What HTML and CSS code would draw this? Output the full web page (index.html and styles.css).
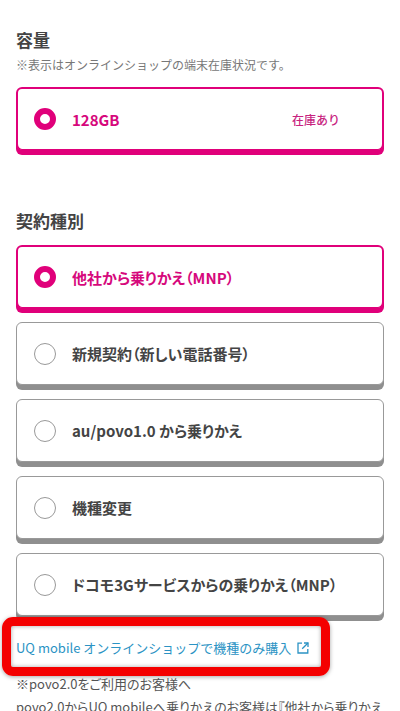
FILE: index.html
```html
<!DOCTYPE html>
<html lang="ja">
<head>
    <meta charset="utf-8">
    <link rel="stylesheet" href="styles.css">
    <title>容量と契約種別</title>
</head>
<body>
    <div class="page">
        <section class="capacity">
            <h2 class="section-title">容量</h2>
            <p class="note">※表示はオンラインショップの端末在庫状況です。</p>
            <div class="option selected">
                <span class="radio"></span>
                <span class="label">128GB</span>
                <span class="stock">在庫あり</span>
            </div>
        </section>

        <section class="contract">
            <h2 class="section-title">契約種別</h2>
            <div class="option-list">
                <div class="option selected">
                    <span class="radio"></span>
                    <span class="label">他社から乗りかえ（MNP）</span>
                </div>
                <div class="option">
                    <span class="radio"></span>
                    <span class="label">新規契約（新しい電話番号）</span>
                </div>
                <div class="option">
                    <span class="radio"></span>
                    <span class="label">au/povo1.0 から乗りかえ</span>
                </div>
                <div class="option">
                    <span class="radio"></span>
                    <span class="label">機種変更</span>
                </div>
                <div class="option">
                    <span class="radio"></span>
                    <span class="label">ドコモ3Gサービスからの乗りかえ（MNP）</span>
                </div>
            </div>
        </section>

        <div class="shop-link-row">
            <a class="shop-link" href="#">UQ mobile オンラインショップで機種のみ購入
                <svg class="external-icon" viewBox="0 0 12 12" width="12" height="12" fill="none" stroke="currentColor" stroke-width="1.3">
                    <path d="M5 1.2H1v9.8h9.8V7"/>
                    <path d="M7 1h4v4"/>
                    <path d="M11 1L5.2 6.8"/>
                </svg>
            </a>
            <div class="highlight"></div>
        </div>

        <p class="povo-title">※povo2.0をご利用のお客様へ</p>
        <p class="povo-text">povo2.0からUQ mobileへ乗りかえのお客様は『他社から乗りかえ（MNP）』をお選びください。</p>
    </div>
</body>
</html>
```

FILE: styles.css
```css
html, body {
    margin: 0;
    height: 711px;
    overflow: hidden;
    background-color: #fff;
}

.page {
    padding: 29px 16px 0;
    font-family: "Noto Sans CJK JP", "Noto Sans", sans-serif;
    color: #444;
}

.section-title {
    margin: 0;
    font-size: 17px;
    line-height: 22px;
    font-weight: 700;
    color: #444;
}

.note {
    margin: 5px 0 13px;
    font-size: 12px;
    line-height: 18px;
    color: #777;
}

.contract {
    margin-top: 60px;
}

.contract .section-title {
    margin-bottom: 13px;
}

.option-list {
    display: flex;
    flex-direction: column;
    gap: 14px;
}

.option {
    display: flex;
    align-items: center;
    box-sizing: border-box;
    height: 63px;
    padding: 0 16px 0 17px;
    background-color: #fff;
    border: 1px solid #999;
    border-radius: 6px;
    box-shadow: 0 5px 0 #8f8f8f;
}

.radio {
    box-sizing: border-box;
    flex: none;
    width: 22px;
    height: 22px;
    margin-right: 16px;
    border: 1px solid #999;
    border-radius: 50%;
    background-color: #fff;
}

.label {
    font-size: 15px;
    font-weight: 700;
    font-feature-settings: "palt";
    color: #444;
}

.stock {
    margin-left: auto;
    margin-right: 26px;
    font-size: 12px;
    font-weight: 500;
    color: #c8247f;
}

.option.selected {
    padding-left: 16px;
    border: 2px solid #e0007a;
    border-bottom-width: 1px;
    box-shadow: 0 5px 0 #e0007a;
}

.option.selected .radio {
    border: 6px solid #e0007a;
}

.option.selected .label {
    color: #d6087c;
}

.shop-link-row {
    position: relative;
    margin-top: 22px;
    height: 20px;
}

.shop-link {
    display: flex;
    align-items: center;
    gap: 6px;
    font-size: 13px;
    line-height: 20px;
    color: #2b93c4;
    text-decoration: none;
}

.external-icon {
    flex: none;
}

.highlight {
    position: absolute;
    left: -14px;
    top: -21px;
    width: 328px;
    height: 59px;
    box-sizing: border-box;
    border: 9px solid #f40000;
    border-radius: 11px;
    box-shadow: 0 1px 4px rgba(0, 0, 0, 0.35), inset 0 0 4px rgba(0, 0, 0, 0.35);
}

.povo-title {
    margin: 17px 0 0;
    font-size: 13px;
    line-height: 18px;
    font-feature-settings: "palt";
    color: #555;
}

.povo-text {
    margin: 5px 0 0;
    font-size: 13px;
    line-height: 18px;
    font-feature-settings: "palt";
    color: #555;
}
```
